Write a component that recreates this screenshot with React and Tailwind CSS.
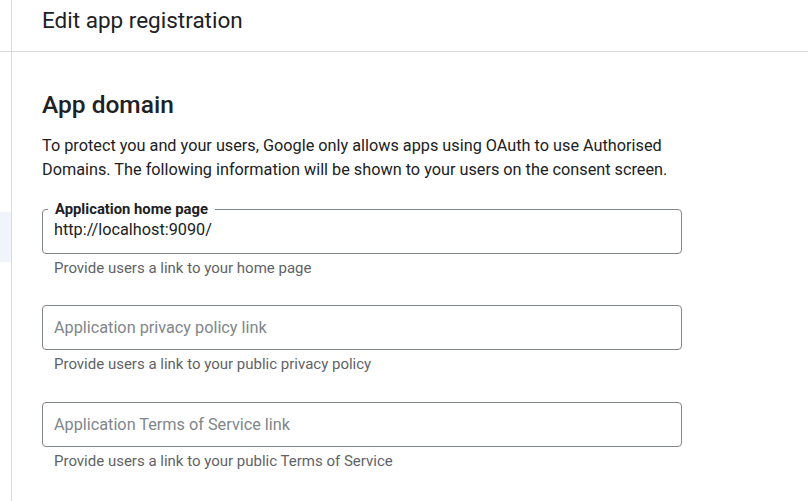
import React from 'react';

const fields = [
  {
    label: 'Application home page',
    value: 'http://localhost:9090/',
    placeholder: '',
    helper: 'Provide users a link to your home page',
  },
  {
    label: '',
    value: '',
    placeholder: 'Application privacy policy link',
    helper: 'Provide users a link to your public privacy policy',
  },
  {
    label: '',
    value: '',
    placeholder: 'Application Terms of Service link',
    helper: 'Provide users a link to your public Terms of Service',
  },
];

const Field = ({ label, value, placeholder, helper }) => (
  <div className="flex flex-col">
    <div className="relative h-[45px] w-[640px] rounded-[4px] border border-[#80868b] flex items-center">
      {label && (
        <span className="absolute -top-[9px] left-[5px] px-[7px] bg-white text-[14.8px] leading-[16px] font-bold text-[#202124]">
          {label}
        </span>
      )}
      <input
        className={`w-full h-full px-[11px] bg-transparent text-[16.25px] text-[#202124] placeholder:text-[#80868b] outline-none ${label ? 'pb-[5px]' : ''}`}
        defaultValue={value}
        placeholder={placeholder}
      />
    </div>
    <p className="mt-[4px] pl-[12px] text-[15px] leading-[20px] text-[#5f6368]">{helper}</p>
  </div>
);

const App = () => {
  return (
    <div className="w-[808px] h-[501px] bg-white overflow-hidden flex flex-col font-['Roboto',_'Liberation_Sans',_sans-serif] text-[#202124]">
      {/* header */}
      <div className="flex h-[52px] border-b border-[#dadce0] shrink-0">
        <div className="w-[12px] border-r border-[#dadce0] shrink-0"></div>
        <h1 className="pl-[30px] pt-[4px] text-[22.5px] leading-[32px] font-normal">Edit app registration</h1>
      </div>

      {/* body */}
      <div className="flex flex-1">
        <div className="w-[12px] border-r border-[#dadce0] shrink-0">
          <div className="mt-[160px] h-[50px] bg-[#f1f4fb]"></div>
        </div>

        <main className="pl-[30px] pt-[37px] flex flex-col">
          <h2 className="text-[24.5px] leading-[32px] font-medium">App domain</h2>
          <p className="mt-[13px] w-[640px] text-[16.25px] leading-[24px]">
            To protect you and your users, Google only allows apps using OAuth to use Authorised Domains. The following information will be shown to your users on the consent screen.
          </p>

          <div className="mt-[27px] flex flex-col gap-[27.25px]">
            {fields.map((f) => (
              <Field key={f.helper} {...f} />
            ))}
          </div>
        </main>
      </div>
    </div>
  );
};

export default App;
